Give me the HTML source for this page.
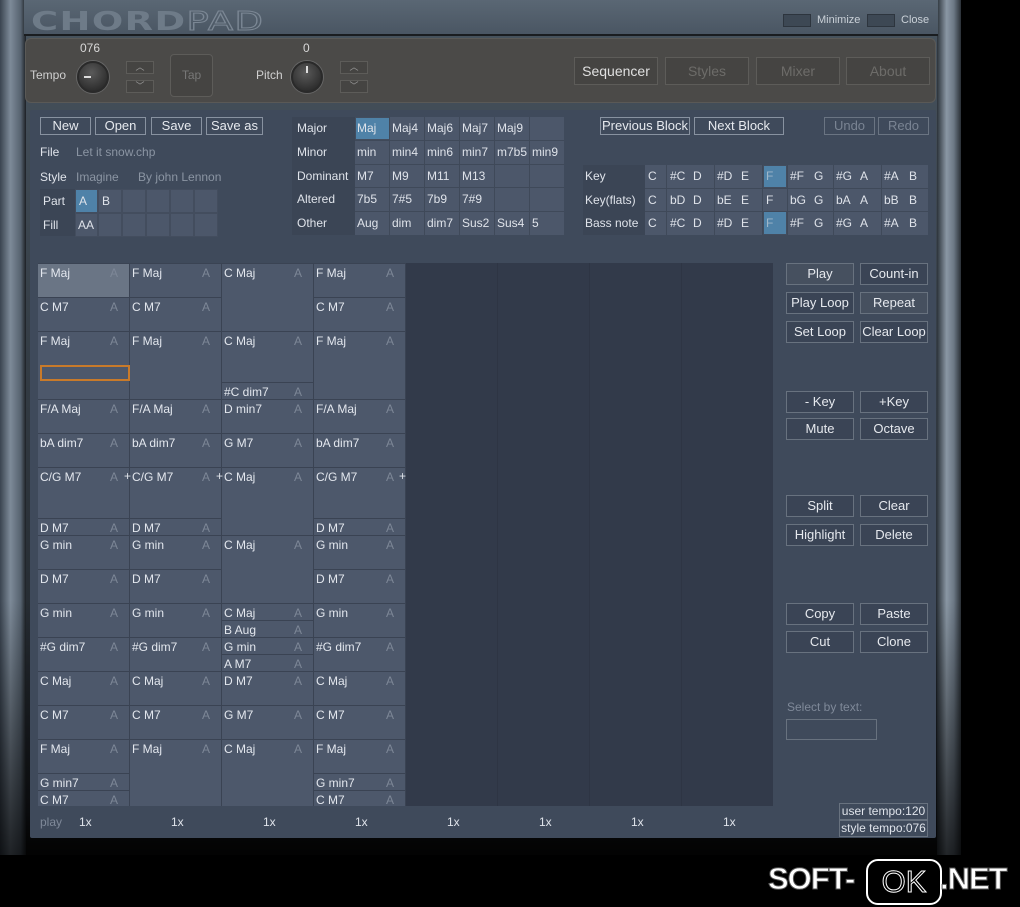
<!DOCTYPE html>
<html><head><meta charset="utf-8"><style>
*{margin:0;padding:0;box-sizing:border-box}
body{width:1020px;height:907px;background:#000;position:relative;overflow:hidden;font-family:"Liberation Sans",sans-serif;font-size:12px;color:#dfe3ea}
.a{position:absolute}
.lf{left:0;top:0;width:26px;height:855px;background:linear-gradient(90deg,#3a4450,#7d8a98 40%,#56626f 80%,#1c2024)}
.rf{left:937px;top:0;width:24px;height:855px;background:linear-gradient(90deg,#2c333a,#8a97a4 40%,#6c7885 70%,#2a3036)}
.shade{left:0;top:600px;width:961px;height:255px;background:linear-gradient(rgba(0,0,0,0),rgba(0,0,0,0.75))}
.win{left:24px;top:0;width:914px;height:855px;background:linear-gradient(#48545f,#1b1f24 95%,#0a0a0a)}
.title{left:24px;top:0;width:914px;height:36px;background:linear-gradient(#5a6774,#4a5663);border-bottom:2px solid #1a1d20}
.top{left:25px;top:38px;width:911px;height:65px;background:#4b4a48;border-radius:6px;border:1px solid #5a5956}
.main{left:30px;top:110px;width:906px;height:728px;background:#3f4a5b;border-radius:2px}
.btn{position:absolute;border:1px solid #8892a0;color:#e6e9ee;text-align:center;font-size:13px;line-height:16px}
.rb{position:absolute;border:1px solid #68727f;color:#e6e9ee;text-align:center;font-size:13px;line-height:20px;width:68px;height:22px;background:#3a4455}
.tab{position:absolute;border:1px solid #5d5c59;background:#454442;color:#6d6c69;text-align:center;font-size:14px;line-height:26px;top:57px;width:84px;height:28px}
.cell{position:absolute;background:#4c576a;border:1px solid #434d5e}
.blue{background:#4f82a8!important}
.lbl{position:absolute;color:#dfe3ea;font-size:12px}
.ch{position:absolute;width:92px;background:#4d586b;border-top:1px solid #3a4353;border-right:1px solid #3a4353;padding:2px 0 0 2px;font-size:12px;color:#e3e7ee;white-space:nowrap}
.ch i{position:absolute;left:72px;top:2px;font-style:normal;color:#7d8797}
</style></head><body>
<div class="a win"></div>
<div class="a lf"></div>
<div class="a rf"></div>
<div class="a shade"></div>
<div class="a title"></div>
<div class="a" style="left:31px;top:9px;font-size:26px;line-height:26px;font-weight:bold;letter-spacing:1px;color:#6e7b88;font-family:'DejaVu Sans',sans-serif;transform:scaleX(1.42);transform-origin:left">CHORD<span style="color:transparent;-webkit-text-stroke:1px #7b8794;font-weight:normal">PAD</span></div>
<div class="a" style="left:783px;top:14px;width:28px;height:13px;background:#3d4854;border:1px solid #2d353e"></div>
<div class="a" style="left:817px;top:14px;font-size:11px;color:#c9d0d7">Minimize</div>
<div class="a" style="left:867px;top:14px;width:28px;height:13px;background:#3d4854;border:1px solid #2d353e"></div>
<div class="a" style="left:901px;top:14px;font-size:11px;color:#c9d0d7">Close</div>

<div class="a top"></div>
<div class="a" style="left:80px;top:41px;color:#d8d8d8">076</div>
<div class="a" style="left:30px;top:68px;color:#d0d0d0">Tempo</div>
<div class="a" style="left:77px;top:61px;width:32px;height:32px;border-radius:50%;background:radial-gradient(circle at 45% 35%,#5a5a5a,#1e1e1e);border:2px solid #2a2a2a;box-shadow:0 0 0 1px #666"></div>
<div class="a" style="left:84px;top:76px;width:7px;height:2px;background:#ddd"></div>
<div class="a" style="left:126px;top:61px;width:28px;height:13px;border:1px solid #5d5c59;background:#454442;color:#999;font-size:9px;text-align:center;line-height:11px">︿</div>
<div class="a" style="left:126px;top:80px;width:28px;height:13px;border:1px solid #5d5c59;background:#454442;color:#999;font-size:9px;text-align:center;line-height:11px">﹀</div>
<div class="a" style="left:170px;top:54px;width:43px;height:43px;border:1px solid #5d5c59;border-radius:4px;background:#454442;color:#777;text-align:center;line-height:40px">Tap</div>
<div class="a" style="left:303px;top:41px;color:#d8d8d8">0</div>
<div class="a" style="left:256px;top:68px;color:#d0d0d0">Pitch</div>
<div class="a" style="left:291px;top:61px;width:32px;height:32px;border-radius:50%;background:radial-gradient(circle at 45% 35%,#5a5a5a,#1e1e1e);border:2px solid #2a2a2a;box-shadow:0 0 0 1px #666"></div>
<div class="a" style="left:306px;top:66px;width:2px;height:7px;background:#ddd"></div>
<div class="a" style="left:340px;top:61px;width:28px;height:13px;border:1px solid #5d5c59;background:#454442;color:#999;font-size:9px;text-align:center;line-height:11px">︿</div>
<div class="a" style="left:340px;top:80px;width:28px;height:13px;border:1px solid #5d5c59;background:#454442;color:#999;font-size:9px;text-align:center;line-height:11px">﹀</div>
<div class="tab" style="left:574px;color:#e0e0e0">Sequencer</div>
<div class="tab" style="left:665px">Styles</div>
<div class="tab" style="left:756px">Mixer</div>
<div class="tab" style="left:846px">About</div>

<div class="a main"></div>
<div class="btn" style="left:40px;top:117px;width:51px;height:18px">New</div>
<div class="btn" style="left:95px;top:117px;width:51px;height:18px">Open</div>
<div class="btn" style="left:151px;top:117px;width:51px;height:18px">Save</div>
<div class="btn" style="left:206px;top:117px;width:57px;height:18px">Save as</div>
<div class="lbl" style="left:40px;top:145px">File</div><div class="lbl" style="left:76px;top:145px;color:#8b95a3">Let it snow.chp</div>
<div class="lbl" style="left:40px;top:170px">Style</div><div class="lbl" style="left:76px;top:170px;color:#8b95a3">Imagine</div><div class="lbl" style="left:138px;top:170px;color:#8b95a3">By john Lennon</div>
<div class="a" style="left:40px;top:189px;width:35px;height:47px;background:#3b4555"></div>
<div class="lbl" style="left:43px;top:194px">Part</div><div class="lbl" style="left:43px;top:218px">Fill</div>
<div class="cell blue" style="left:75px;top:189px;width:23px;height:24px"></div><div class="lbl" style="left:79px;top:194px">A</div>
<div class="cell" style="left:98px;top:189px;width:24px;height:24px"></div><div class="lbl" style="left:102px;top:194px">B</div>
<div class="cell" style="left:122px;top:189px;width:24px;height:24px"></div><div class="cell" style="left:146px;top:189px;width:24px;height:24px"></div><div class="cell" style="left:170px;top:189px;width:24px;height:24px"></div><div class="cell" style="left:194px;top:189px;width:24px;height:24px"></div>
<div class="cell" style="left:75px;top:213px;width:23px;height:24px"></div><div class="lbl" style="left:78px;top:218px">AA</div>
<div class="cell" style="left:98px;top:213px;width:24px;height:24px"></div><div class="cell" style="left:122px;top:213px;width:24px;height:24px"></div><div class="cell" style="left:146px;top:213px;width:24px;height:24px"></div><div class="cell" style="left:170px;top:213px;width:24px;height:24px"></div><div class="cell" style="left:194px;top:213px;width:24px;height:24px"></div>

<div class="a" style="left:292px;top:117px;width:63px;height:118px;background:#3b4555"></div>
<div class="lbl" style="left:297px;top:121px">Major</div><div class="lbl" style="left:297px;top:145px">Minor</div><div class="lbl" style="left:297px;top:169px">Dominant</div><div class="lbl" style="left:297px;top:192px">Altered</div><div class="lbl" style="left:297px;top:216px">Other</div>
<div class="a" style="left:355px;top:117px;width:209px;height:118px;background:#4c576a"></div>
<div class="cell blue" style="left:355px;top:117px;width:35px;height:23px"></div>
<div class="a" style="left:389px;top:117px;width:1px;height:118px;background:#3f4959"></div><div class="a" style="left:424px;top:117px;width:1px;height:118px;background:#3f4959"></div><div class="a" style="left:459px;top:117px;width:1px;height:118px;background:#3f4959"></div><div class="a" style="left:494px;top:117px;width:1px;height:118px;background:#3f4959"></div><div class="a" style="left:529px;top:117px;width:1px;height:118px;background:#3f4959"></div>
<div class="a" style="left:355px;top:140px;width:209px;height:1px;background:#3f4959"></div><div class="a" style="left:355px;top:164px;width:209px;height:1px;background:#3f4959"></div><div class="a" style="left:355px;top:187px;width:209px;height:1px;background:#3f4959"></div><div class="a" style="left:355px;top:211px;width:209px;height:1px;background:#3f4959"></div>
<div class="lbl" style="left:357px;top:121px">Maj</div><div class="lbl" style="left:392px;top:121px">Maj4</div><div class="lbl" style="left:427px;top:121px">Maj6</div><div class="lbl" style="left:462px;top:121px">Maj7</div><div class="lbl" style="left:497px;top:121px">Maj9</div>
<div class="lbl" style="left:357px;top:145px">min</div><div class="lbl" style="left:392px;top:145px">min4</div><div class="lbl" style="left:427px;top:145px">min6</div><div class="lbl" style="left:462px;top:145px">min7</div><div class="lbl" style="left:497px;top:145px">m7b5</div><div class="lbl" style="left:532px;top:145px">min9</div>
<div class="lbl" style="left:357px;top:169px">M7</div><div class="lbl" style="left:392px;top:169px">M9</div><div class="lbl" style="left:427px;top:169px">M11</div><div class="lbl" style="left:462px;top:169px">M13</div>
<div class="lbl" style="left:357px;top:192px">7b5</div><div class="lbl" style="left:392px;top:192px">7#5</div><div class="lbl" style="left:427px;top:192px">7b9</div><div class="lbl" style="left:462px;top:192px">7#9</div>
<div class="lbl" style="left:357px;top:216px">Aug</div><div class="lbl" style="left:392px;top:216px">dim</div><div class="lbl" style="left:427px;top:216px">dim7</div><div class="lbl" style="left:462px;top:216px">Sus2</div><div class="lbl" style="left:497px;top:216px">Sus4</div><div class="lbl" style="left:532px;top:216px">5</div>

<div class="btn" style="left:600px;top:117px;width:90px;height:18px">Previous Block</div>
<div class="btn" style="left:694px;top:117px;width:90px;height:18px">Next Block</div>
<div class="btn" style="left:824px;top:117px;width:51px;height:18px;color:#7a8493;border-color:#6a7482">Undo</div>
<div class="btn" style="left:878px;top:117px;width:51px;height:18px;color:#7a8493;border-color:#6a7482">Redo</div>
<div class="a" style="left:583px;top:165px;width:62px;height:70px;background:#3b4555"></div>
<div class="lbl" style="left:585px;top:169px">Key</div><div class="lbl" style="left:585px;top:193px">Key(flats)</div><div class="lbl" style="left:585px;top:216px">Bass note</div>
<div class="a" style="left:645px;top:165px;width:283px;height:70px;background:#4c576a"></div>
<div class="cell blue" style="left:763px;top:165px;width:24px;height:23px"></div>
<div class="cell blue" style="left:763px;top:211px;width:24px;height:24px"></div>
<div class="a" style="left:645px;top:188px;width:283px;height:1px;background:#3f4959"></div><div class="a" style="left:645px;top:211px;width:283px;height:1px;background:#3f4959"></div>
<div class="a" style="left:666px;top:165px;width:1px;height:70px;background:#3f4959"></div><div class="a" style="left:714px;top:165px;width:1px;height:70px;background:#3f4959"></div><div class="a" style="left:762px;top:165px;width:1px;height:70px;background:#3f4959"></div><div class="a" style="left:787px;top:165px;width:1px;height:70px;background:#3f4959"></div><div class="a" style="left:833px;top:165px;width:1px;height:70px;background:#3f4959"></div><div class="a" style="left:881px;top:165px;width:1px;height:70px;background:#3f4959"></div>
<div class="lbl" style="left:648px;top:169px">C</div><div class="lbl" style="left:670px;top:169px">#C</div><div class="lbl" style="left:693px;top:169px">D</div><div class="lbl" style="left:717px;top:169px">#D</div><div class="lbl" style="left:741px;top:169px">E</div><div class="lbl" style="left:766px;top:169px;color:#9fb6c9">F</div><div class="lbl" style="left:790px;top:169px">#F</div><div class="lbl" style="left:814px;top:169px">G</div><div class="lbl" style="left:836px;top:169px">#G</div><div class="lbl" style="left:860px;top:169px">A</div><div class="lbl" style="left:884px;top:169px">#A</div><div class="lbl" style="left:909px;top:169px">B</div>
<div class="lbl" style="left:648px;top:193px">C</div><div class="lbl" style="left:670px;top:193px">bD</div><div class="lbl" style="left:693px;top:193px">D</div><div class="lbl" style="left:717px;top:193px">bE</div><div class="lbl" style="left:741px;top:193px">E</div><div class="lbl" style="left:766px;top:193px">F</div><div class="lbl" style="left:790px;top:193px">bG</div><div class="lbl" style="left:814px;top:193px">G</div><div class="lbl" style="left:836px;top:193px">bA</div><div class="lbl" style="left:860px;top:193px">A</div><div class="lbl" style="left:884px;top:193px">bB</div><div class="lbl" style="left:909px;top:193px">B</div>
<div class="lbl" style="left:648px;top:216px">C</div><div class="lbl" style="left:670px;top:216px">#C</div><div class="lbl" style="left:693px;top:216px">D</div><div class="lbl" style="left:717px;top:216px">#D</div><div class="lbl" style="left:741px;top:216px">E</div><div class="lbl" style="left:766px;top:216px;color:#9fb6c9">F</div><div class="lbl" style="left:790px;top:216px">#F</div><div class="lbl" style="left:814px;top:216px">G</div><div class="lbl" style="left:836px;top:216px">#G</div><div class="lbl" style="left:860px;top:216px">A</div><div class="lbl" style="left:884px;top:216px">#A</div><div class="lbl" style="left:909px;top:216px">B</div>

<div class="a" style="left:38px;top:263px;width:735px;height:543px;background:#323a4a"></div>
<div class="a" style="left:497px;top:263px;width:1px;height:543px;background:#2e3544"></div><div class="a" style="left:589px;top:263px;width:1px;height:543px;background:#2e3544"></div><div class="a" style="left:681px;top:263px;width:1px;height:543px;background:#2e3544"></div>

<div class="ch" style="left:38px;top:263px;height:34px;background:#6a7585">F Maj<i>A</i></div>
<div class="ch" style="left:38px;top:297px;height:34px">C M7<i>A</i></div>
<div class="ch" style="left:38px;top:331px;height:68px">F Maj<i>A</i></div>
<div class="a" style="left:40px;top:365px;width:90px;height:16px;border:2px solid #c87a2a"></div>
<div class="ch" style="left:38px;top:399px;height:34px">F/A Maj<i>A</i></div>
<div class="ch" style="left:38px;top:433px;height:34px">bA dim7<i>A</i></div>
<div class="ch" style="left:38px;top:467px;height:51px">C/G M7<i>A</i></div>
<div class="ch" style="left:38px;top:518px;height:17px">D M7<i>A</i></div>
<div class="ch" style="left:38px;top:535px;height:34px">G min<i>A</i></div>
<div class="ch" style="left:38px;top:569px;height:34px">D M7<i>A</i></div>
<div class="ch" style="left:38px;top:603px;height:34px">G min<i>A</i></div>
<div class="ch" style="left:38px;top:637px;height:34px">#G dim7<i>A</i></div>
<div class="ch" style="left:38px;top:671px;height:34px">C Maj<i>A</i></div>
<div class="ch" style="left:38px;top:705px;height:34px">C M7<i>A</i></div>
<div class="ch" style="left:38px;top:739px;height:34px">F Maj<i>A</i></div>
<div class="ch" style="left:38px;top:773px;height:17px">G min7<i>A</i></div>
<div class="ch" style="left:38px;top:790px;height:16px">C M7<i>A</i></div>
<div class="ch" style="left:130px;top:263px;height:34px">F Maj<i>A</i></div>
<div class="ch" style="left:130px;top:297px;height:34px">C M7<i>A</i></div>
<div class="ch" style="left:130px;top:331px;height:68px">F Maj<i>A</i></div>
<div class="ch" style="left:130px;top:399px;height:34px">F/A Maj<i>A</i></div>
<div class="ch" style="left:130px;top:433px;height:34px">bA dim7<i>A</i></div>
<div class="ch" style="left:130px;top:467px;height:51px">C/G M7<i>A</i></div>
<div class="ch" style="left:130px;top:518px;height:17px">D M7<i>A</i></div>
<div class="ch" style="left:130px;top:535px;height:34px">G min<i>A</i></div>
<div class="ch" style="left:130px;top:569px;height:34px">D M7<i>A</i></div>
<div class="ch" style="left:130px;top:603px;height:34px">G min<i>A</i></div>
<div class="ch" style="left:130px;top:637px;height:34px">#G dim7<i>A</i></div>
<div class="ch" style="left:130px;top:671px;height:34px">C Maj<i>A</i></div>
<div class="ch" style="left:130px;top:705px;height:34px">C M7<i>A</i></div>
<div class="ch" style="left:130px;top:739px;height:67px">F Maj<i>A</i></div>
<div class="ch" style="left:222px;top:263px;height:68px">C Maj<i>A</i></div>
<div class="ch" style="left:222px;top:331px;height:51px">C Maj<i>A</i></div>
<div class="ch" style="left:222px;top:382px;height:17px">#C dim7<i>A</i></div>
<div class="ch" style="left:222px;top:399px;height:34px">D min7<i>A</i></div>
<div class="ch" style="left:222px;top:433px;height:34px">G M7<i>A</i></div>
<div class="ch" style="left:222px;top:467px;height:68px">C Maj<i>A</i></div>
<div class="ch" style="left:222px;top:535px;height:68px">C Maj<i>A</i></div>
<div class="ch" style="left:222px;top:603px;height:17px">C Maj<i>A</i></div>
<div class="ch" style="left:222px;top:620px;height:17px">B Aug<i>A</i></div>
<div class="ch" style="left:222px;top:637px;height:17px">G min<i>A</i></div>
<div class="ch" style="left:222px;top:654px;height:17px">A M7<i>A</i></div>
<div class="ch" style="left:222px;top:671px;height:34px">D M7<i>A</i></div>
<div class="ch" style="left:222px;top:705px;height:34px">G M7<i>A</i></div>
<div class="ch" style="left:222px;top:739px;height:67px">C Maj<i>A</i></div>
<div class="ch" style="left:314px;top:263px;height:34px">F Maj<i>A</i></div>
<div class="ch" style="left:314px;top:297px;height:34px">C M7<i>A</i></div>
<div class="ch" style="left:314px;top:331px;height:68px">F Maj<i>A</i></div>
<div class="ch" style="left:314px;top:399px;height:34px">F/A Maj<i>A</i></div>
<div class="ch" style="left:314px;top:433px;height:34px">bA dim7<i>A</i></div>
<div class="ch" style="left:314px;top:467px;height:51px">C/G M7<i>A</i></div>
<div class="ch" style="left:314px;top:518px;height:17px">D M7<i>A</i></div>
<div class="ch" style="left:314px;top:535px;height:34px">G min<i>A</i></div>
<div class="ch" style="left:314px;top:569px;height:34px">D M7<i>A</i></div>
<div class="ch" style="left:314px;top:603px;height:34px">G min<i>A</i></div>
<div class="ch" style="left:314px;top:637px;height:34px">#G dim7<i>A</i></div>
<div class="ch" style="left:314px;top:671px;height:34px">C Maj<i>A</i></div>
<div class="ch" style="left:314px;top:705px;height:34px">C M7<i>A</i></div>
<div class="ch" style="left:314px;top:739px;height:34px">F Maj<i>A</i></div>
<div class="ch" style="left:314px;top:773px;height:17px">G min7<i>A</i></div>
<div class="ch" style="left:314px;top:790px;height:16px">C M7<i>A</i></div>
<div class="lbl" style="left:124px;top:469px">+</div><div class="lbl" style="left:216px;top:469px">+</div><div class="lbl" style="left:399px;top:469px">+</div>

<div class="lbl" style="left:40px;top:815px;color:#7f8999">play</div>
<div class="lbl" style="left:79px;top:815px">1x</div><div class="lbl" style="left:171px;top:815px">1x</div><div class="lbl" style="left:263px;top:815px">1x</div><div class="lbl" style="left:355px;top:815px">1x</div><div class="lbl" style="left:447px;top:815px">1x</div><div class="lbl" style="left:539px;top:815px">1x</div><div class="lbl" style="left:631px;top:815px">1x</div><div class="lbl" style="left:723px;top:815px">1x</div>

<div class="rb" style="left:786px;top:263px;background:#46505f">Play</div><div class="rb" style="left:860px;top:263px">Count-in</div>
<div class="rb" style="left:786px;top:292px">Play Loop</div><div class="rb" style="left:860px;top:292px;background:#46505f">Repeat</div>
<div class="rb" style="left:786px;top:321px">Set Loop</div><div class="rb" style="left:860px;top:321px">Clear Loop</div>
<div class="rb" style="left:786px;top:391px">- Key</div><div class="rb" style="left:860px;top:391px">+Key</div>
<div class="rb" style="left:786px;top:418px">Mute</div><div class="rb" style="left:860px;top:418px">Octave</div>
<div class="rb" style="left:786px;top:495px">Split</div><div class="rb" style="left:860px;top:495px">Clear</div>
<div class="rb" style="left:786px;top:524px">Highlight</div><div class="rb" style="left:860px;top:524px">Delete</div>
<div class="rb" style="left:786px;top:603px">Copy</div><div class="rb" style="left:860px;top:603px">Paste</div>
<div class="rb" style="left:786px;top:631px">Cut</div><div class="rb" style="left:860px;top:631px">Clone</div>
<div class="lbl" style="left:787px;top:700px;color:#7f8999">Select by text:</div>
<div class="a" style="left:786px;top:719px;width:91px;height:21px;border:1px solid #68727f"></div>
<div class="a" style="left:839px;top:803px;width:89px;height:17px;border:1px solid #68727f;font-size:12px;text-align:center;line-height:15px">user tempo:120</div>
<div class="a" style="left:839px;top:820px;width:89px;height:17px;border:1px solid #68727f;font-size:12px;text-align:center;line-height:15px">style tempo:076</div>

<div class="a" style="left:768px;top:861px;font-size:31px;font-weight:bold;color:#fff;-webkit-text-stroke:1px #555;letter-spacing:-1px">SOFT-</div>
<div class="a" style="left:866px;top:859px;width:76px;height:46px;border:2px solid #fff;border-radius:12px;font-size:31px;color:#000;text-align:center;line-height:42px;-webkit-text-stroke:1px #fff">OK</div>
<div class="a" style="left:940px;top:861px;font-size:31px;font-weight:bold;color:#fff;-webkit-text-stroke:1px #555;letter-spacing:-1px">.NET</div>
</body></html>
